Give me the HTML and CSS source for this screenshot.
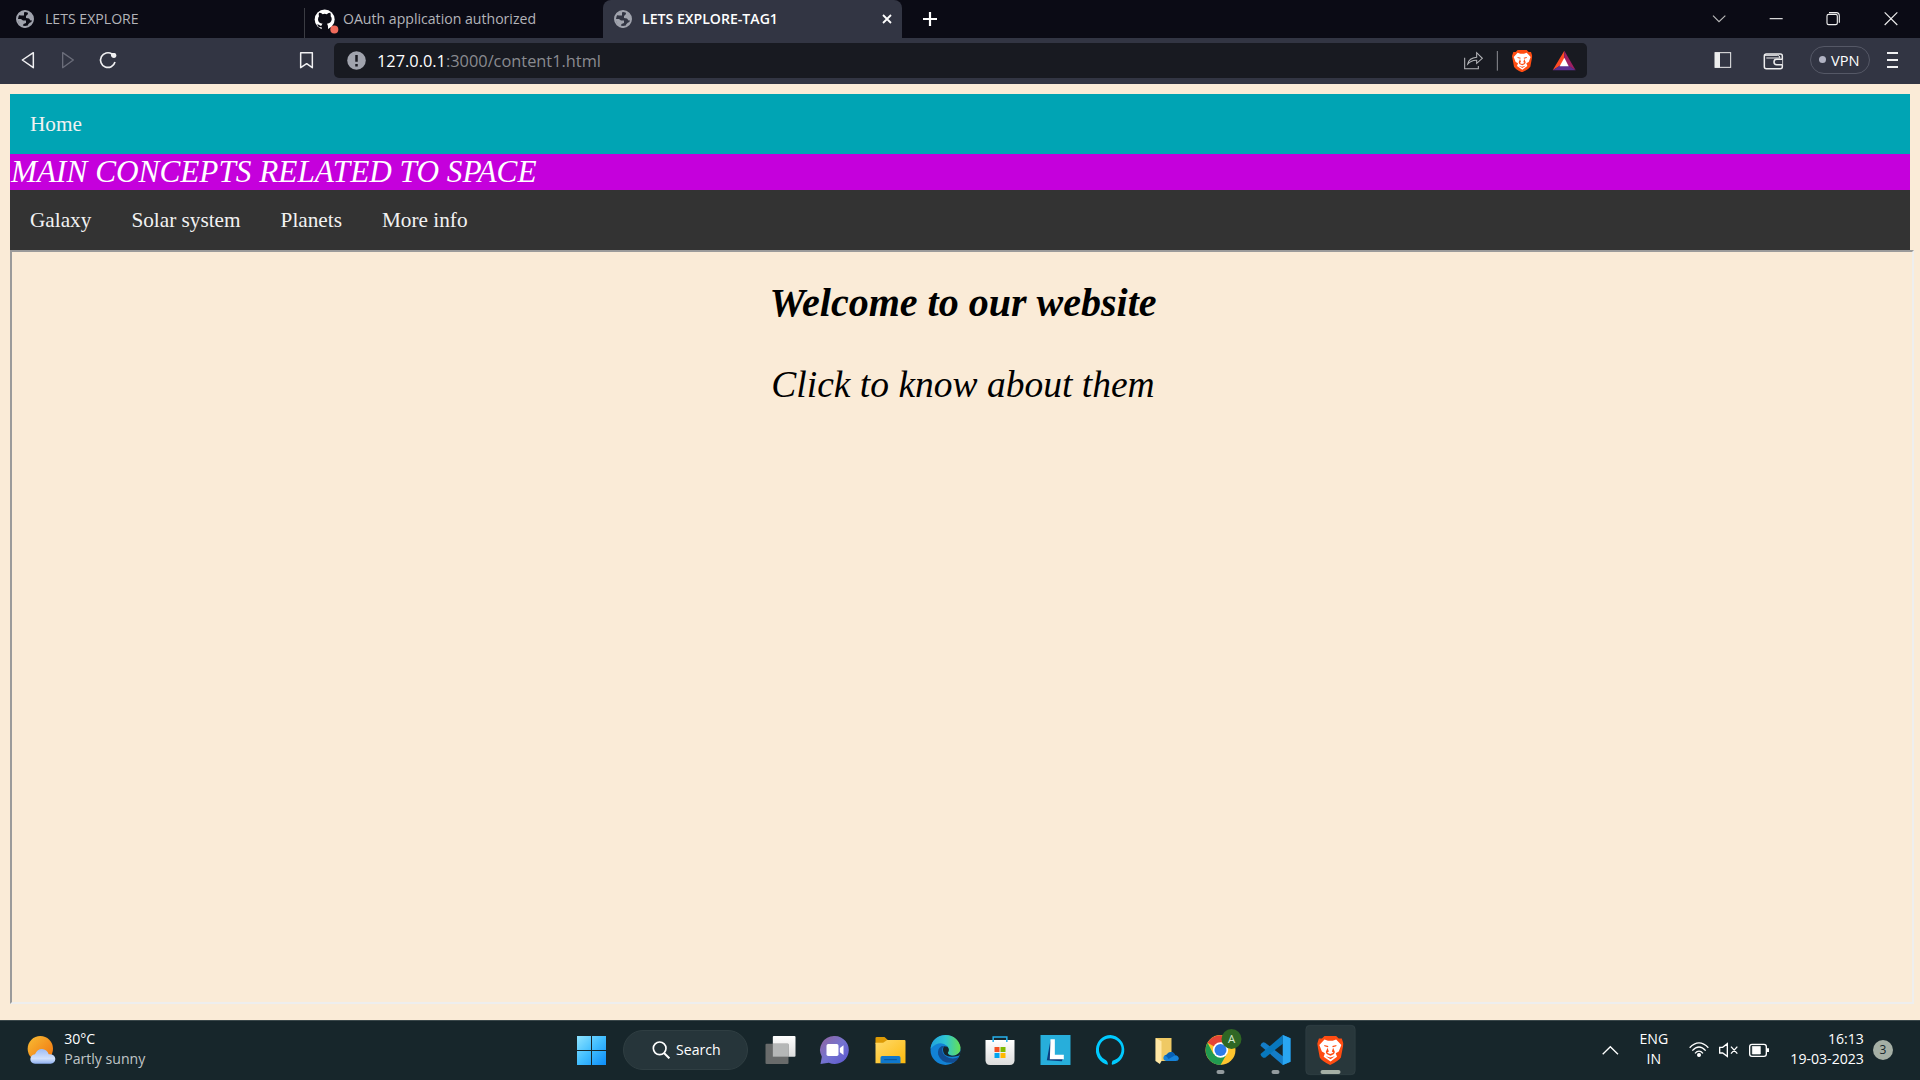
FILE: index.html
```html
<!DOCTYPE html>
<html lang="en">
<head>
<meta charset="utf-8">
<title>LETS EXPLORE-TAG1</title>
<link rel="stylesheet" href="styles.css">
</head>
<body>
<svg class="defs" width="0" height="0">
  <defs>
    <symbol id="globe" viewBox="0 0 18 18"><circle cx="9" cy="9" r="8" fill="none" stroke="#a0a3ad" stroke-width="2"/><path d="M1.5 7 2.5 5 5 5.5 8 5.5 8 2.5 10 1H6L2 4 1 9 5 9 7 10.5 10 10.5 10 13 7.5 14 6.5 17 9 18 13 16 12 14.5 14 12.5 17 12 17 6 15 3.5 11.5 1.5 12 4 10 6 10 8 13 8.5 14.5 10.5 17 10 16 14 10 17.2 4 15 1 9Z" fill="#a0a3ad" fill-rule="evenodd"/></symbol>
    <symbol id="lion" viewBox="216 148 61 69"><path d="M233 150H260L266 156H273L277 168 271 200Q266 208 246 217 226 208 222 200L216 168 220 156H227Z" fill="#ff4d12"/><path d="M233 158 241 161H252L260 158 272 171 266 186 259 190 262 198 247 209 231 198 234 190 227 186 221 171Z" fill="#fff"/><path d="M232 171 242 173 241 176 233 174ZM261 171 251 173 252 176 260 174ZM240 177 243 186 239 189 246 192 254 189 250 186 253 177 257 187 255 192 247 196 238 192 236 187ZM236 197 246 200 257 197 247 204Z" fill="#ff4d12"/></symbol>
    <linearGradient id="win" x1="0" y1="0" x2="1" y2="1"><stop stop-color="#8fe4ff"/><stop offset=".5" stop-color="#40bdff"/><stop offset="1" stop-color="#0c8cf8"/></linearGradient>
    <linearGradient id="chat" x1="0" y1="0" x2="1" y2="1"><stop stop-color="#93639c"/><stop offset=".5" stop-color="#7574d0"/><stop offset="1" stop-color="#5a55cf"/></linearGradient>
    <linearGradient id="fold" x1="0" y1="0" x2="1" y2="1"><stop stop-color="#ffda6b"/><stop offset="1" stop-color="#fcb90c"/></linearGradient>
    <linearGradient id="edge" x1="0" y1="0" x2="1" y2="0"><stop stop-color="#21a2df"/><stop offset=".5" stop-color="#2fc6d2"/><stop offset="1" stop-color="#66e052"/></linearGradient>
    <linearGradient id="white" x1="0" y1="0" x2="0" y2="1"><stop stop-color="#fff"/><stop offset="1" stop-color="#dcdcdc"/></linearGradient>
    <linearGradient id="sun" x1="0" y1="0" x2="1" y2="1"><stop stop-color="#f8bd35"/><stop offset="1" stop-color="#f0700c"/></linearGradient>
    <linearGradient id="cloud" x1="0" y1="0" x2="0" y2="1"><stop stop-color="#9dbcf4"/><stop offset=".65" stop-color="#d2e1fb"/><stop offset="1" stop-color="#8fb0f0"/></linearGradient>
  </defs>
</svg>

<header class="tabs">
  <div class="tab first"><svg class="globe"><use href="#globe"/></svg><span>LETS EXPLORE</span></div>
  <div class="tab second">
    <svg class="github" viewBox="940 26 75 74"><circle cx="972" cy="57" r="30" fill="#fff"/><path d="M955 37Q962 37 966 41 972 39 978 41 984 37 989 37 991 42 990 47 994 51 993 58 991 68 979 70 982 74 982 79V89H963V80Q953 82 949 72 955 71 958 75 961 77 963 74 964 71 966 70 953 68 952 58 952 51 955 47 953 42 955 37Z" fill="#0b0b15"/><circle cx="1001" cy="87" r="12" fill="#ef6a5b"/></svg>
    <span>OAuth application authorized</span>
  </div>
  <div class="tab active"><svg class="globe"><use href="#globe"/></svg><span>LETS EXPLORE-TAG1</span><svg class="x" viewBox="0 0 10 10"><path d="M1 1 9 9M9 1 1 9" stroke="#fff" stroke-width="1.8"/></svg></div>
  <svg class="plus" viewBox="0 0 16 16"><path d="M8 1V15M1 8H15" stroke="#fff" stroke-width="2.2"/></svg>
  <svg class="wincontrols" viewBox="775 0 665 114" fill="none" stroke="#eee" stroke-width="3.4"><path d="M820 47 838 65 857 47" stroke="#bbb"/><path d="M990 56H1029"/><rect x="1162" y="43" width="31" height="31" rx="5"/><path d="M1168 38H1190Q1199 38 1199 48V68"/><path d="M1335 37 1373 75M1373 37 1335 75"/></svg>
</header>

<div class="toolbar">
  <svg class="btn" viewBox="24 114 120 138"><path d="M100 158V203L67 180Z" fill="none" stroke="#f0f0f2" stroke-width="4.5" stroke-linejoin="round"/></svg>
  <svg class="btn" viewBox="144 114 120 138"><path d="M188 158V203L220 180Z" fill="none" stroke="#6b6d7a" stroke-width="4" stroke-linejoin="round"/></svg>
  <svg class="btn" viewBox="264 114 120 138"><path d="M336 162A22 22 0 1 0 345 186" fill="none" stroke="#f0f0f2" stroke-width="5"/><path d="M333 159H344Q349 160 349 166 349 174 342 174 334 174 333 166Z" fill="#f0f0f2"/></svg>
  <svg class="btn mark" viewBox="858 114 120 138"><path d="M902 158H937V203L920 191 902 203Z" fill="none" stroke="#f0f0f2" stroke-width="4.5" stroke-linejoin="round"/></svg>
  <div class="address">
    <svg class="info" viewBox="0 0 19 19"><circle cx="9.5" cy="9.5" r="9.3" fill="#a0a3ad"/><path d="M9.5 4V10.8M9.5 13V15.4" stroke="#181a21" stroke-width="2.5"/></svg>
    <span class="url"><b>127.0.0.1</b>:3000/content1.html</span>
    <svg class="tools" viewBox="60 129 381 105"><path d="M74 173V206H115V198M83 192Q87 174 110 172V158L127 175 110 190V181Q95 180 83 192Z" fill="none" stroke="#b4b5b9" stroke-width="3.2"/><path d="M172 153V212" stroke="#8d8f95" stroke-width="3"/><use href="#lion" x="216" y="148" width="61" height="69"/><path d="M373 152 338 211 372 190Z" fill="#ff4b23"/><path d="M373 152 407 211 372 190Z" fill="#9e1f63"/><path d="M338 211H407L373 188Z" fill="#5c2f91"/><path d="M373 173 359 199H386Z" fill="#fff"/></svg>
  </div>
  <svg class="side" viewBox="800 114 260 138" fill="none" stroke="#ededee" stroke-width="3"><rect x="824" y="158" width="47" height="44"/><path d="M824 157H839V203H824Z" fill="#ededee" stroke="none"/><rect x="972" y="162" width="54" height="44" rx="6" stroke-width="4.5"/><path d="M974 166H1012Q1018 166 1019 174H978" stroke-width="3"/><path d="M1026 178H1009Q1001 178 1001 186 1001 194 1009 194H1026" fill="#323543" stroke-width="4.5"/></svg>
  <div class="vpn"><i></i><span>VPN</span></div>
  <svg class="menu" viewBox="0 0 11 16"><path d="M0 1H11M0 8H11M0 15H11" stroke="#f0f0f2" stroke-width="1.8"/></svg>
</div>

<main>
  <nav class="home"><a>Home</a></nav>
  <div class="banner">MAIN CONCEPTS RELATED TO SPACE</div>
  <nav class="topics"><a>Galaxy</a><a>Solar system</a><a>Planets</a><a>More info</a></nav>
  <section class="frame"><h1>Welcome to our website</h1><p>Click to know about them</p></section>
</main>

<footer class="taskbar">
  <div class="weather">
    <svg viewBox="80 165 87 90"><circle cx="120" cy="206" r="38" fill="url(#sun)"/><path d="M104 251Q90 250 90 237 91 225 104 223 111 207 125 207 140 208 145 223 164 222 165 237 164 250 151 251Z" fill="url(#cloud)"/></svg>
    <div class="text"><p>30°C</p><p class="dim">Partly sunny</p></div>
  </div>
  <div class="apps">
    <svg class="start" viewBox="51 78 87 87"><path d="M51 78H93V120H51ZM96 78H138V120H96ZM51 123H93V165H51ZM96 123H138V165H96Z" fill="url(#win)"/></svg>
    <div class="search"><svg viewBox="275 93 54 54"><circle cx="298" cy="115" r="19" fill="none" stroke="#fff" stroke-width="5"/><path d="M311 129 327 145" stroke="#fff" stroke-width="6"/></svg><span>Search</span></div>
    <svg class="app" viewBox="577.5 30 165 180"><rect x="637" y="78" width="68" height="62" rx="3" fill="url(#white)"/><rect x="615" y="101" width="69" height="61" rx="3" fill="#696b6b"/><path d="M637 101H684V140H637Z" fill="#b5b7b7"/></svg>
    <svg class="app" viewBox="742.5 30 165 180"><path d="M823 78A42 42 0 1 1 805 158L780 162 784 140A42 42 0 0 1 823 78Z" fill="url(#chat)"/><rect x="798" y="102" width="36" height="36" rx="5" fill="#fff"/><path d="M838 114 849 106V135L838 127Z" fill="#fff"/></svg>
    <svg class="app" viewBox="907.5 30 165 180"><path d="M945 84Q945 81 949 81H972L982 90V102H945Z" fill="#dd9a05"/><path d="M945 98H968L980 90H1032Q1035 90 1035 94V160H945Z" fill="url(#fold)"/><path d="M960 160V143Q960 138 965 138H1015Q1020 138 1020 143V160Z" fill="#0f78cd"/><path d="M971 149H1009" stroke="#07549b" stroke-width="3"/></svg>
    <svg class="app" viewBox="1072.5 30 165 180"><circle cx="1155" cy="120" r="45" fill="#1282d5"/><path d="M1110 116Q1115 78 1155 75 1193 77 1200 112 1201 135 1178 137 1162 136 1161 127 1168 118 1160 108 1138 88 1110 116Z" fill="url(#edge)"/><path d="M1144 108Q1130 115 1133 134 1143 162 1179 158 1191 151 1196 140 1183 148 1166 144 1146 137 1145 120 1145 114 1150 109Z" fill="#124d92"/><path d="M1150 109Q1144 123 1153 134 1166 145 1194 137L1200 132V122Q1192 137 1174 137 1163 135 1162 128 1169 119 1161 110Z" fill="#17262b"/></svg>
    <svg class="app" viewBox="7.5 30 165 180"><path d="M45 90H132V151Q132 165 118 165H59Q45 165 45 151Z" fill="url(#white)"/><path d="M68 96V81H109V96" fill="none" stroke="#27b1ed" stroke-width="4.5"/><path d="M72 111H87V126H72Z" fill="#f25022"/><path d="M90 111H105V126H90Z" fill="#7fba00"/><path d="M72 129H87V144H72Z" fill="#00a4ef"/><path d="M90 129H105V144H90Z" fill="#ffb900"/></svg>
    <svg class="app" viewBox="172.5 30 165 180"><path d="M210 75H300V165H210Z" fill="#27aedb"/><path d="M240 91 229 151 274 154 280 138H245Z" fill="#0b3c7e"/><path d="M240 88H253V134H280V148H238Z" fill="#fff"/></svg>
    <svg class="app" viewBox="337.5 30 165 180"><path d="M420 75A45 45 0 0 1 425 164Q422 162 426 152A34 34 0 1 0 402 148Q413 154 412 164A45 45 0 0 1 420 75Z" fill="#00caff"/></svg>
    <svg class="app" viewBox="502.5 30 165 180"><path d="M556 84H603V153H556Z" fill="#efc964"/><path d="M555 84 573 94V153L568 162 555 153Z" fill="#ffe7a4"/><path d="M587 153Q577 151 579 141 581 134 588 134 594 124 604 126 612 128 614 136 624 137 625 146 624 153 616 153Z" fill="#1683d9"/><path d="M588 134Q597 122 609 128L614 136 594 147Q590 138 583 137Z" fill="#0760b4"/></svg>
    <svg class="app" viewBox="667.5 30 165 180"><circle cx="750" cy="120" r="45" fill="#ffc52e"/><path d="M750 120 711 98A45 45 0 0 1 789 98H750Z" fill="#e44436"/><path d="M711 98A45 45 0 0 0 750 165L770 130 750 120 729 132Z" fill="#219b50"/><circle cx="750" cy="120" r="23" fill="#fff"/><circle cx="750" cy="120" r="18" fill="#2c7be9"/><circle cx="783" cy="87" r="30" fill="#2f6724"/><text x="783" y="99" font-size="34" text-anchor="middle" fill="#d6ead0">A</text><rect x="738" y="180" width="24" height="12" rx="6" fill="#939b9e"/></svg>
    <svg class="app" viewBox="832.5 30 165 180"><path d="M937 75 960 85V155L937 165 870 107Q870 101 878 97L884 98 937 139Z" fill="#147dc8"/><path d="M937 75V101L884 143 878 143Q870 138 870 132Z" fill="#0878be"/><path d="M937 75 960 85V155L937 165Z" fill="#29a6f2"/><rect x="903" y="180" width="24" height="12" rx="6" fill="#939b9e"/></svg>
    <svg class="app" viewBox="997.5 30 165 180"><rect x="1006" y="46" width="148" height="148" rx="12" fill="#28373b" stroke="#344347" stroke-width="2"/><use href="#lion" x="1040" y="75" width="79" height="90"/><rect x="1050" y="180" width="60" height="12" rx="6" fill="#a5afa5"/></svg>
  </div>
  <div class="tray">
    <svg class="chev" viewBox="65 193 50 31"><path d="M67 221 90 198 113 221" fill="none" stroke="#fff" stroke-width="4"/></svg>
    <div class="lang text"><p>ENG</p><p>IN</p></div>
    <svg class="status" viewBox="330 180 243 60" fill="none" stroke="#fff" stroke-width="4"><path d="M332 203Q360 174 388 203M340 212Q360 190 380 212M348 220Q360 207 372 220"/><circle cx="360" cy="225" r="4" fill="#fff"/><path d="M422 202H431L445 191V229L431 219H422ZM456 200 475 221M475 200 456 221"/><rect x="512" y="193" width="50" height="36" rx="7"/><path d="M520 199H544V222H520Z" fill="#fff" stroke="#fff" stroke-width="2"/><path d="M567 205V216" stroke-width="6"/></svg>
    <div class="clock text"><p>16:13</p><p>19-03-2023</p></div>
    <span class="badge">3</span>
  </div>
</footer>
</body>
</html>
```
FILE: styles.css
```css
* { box-sizing: border-box; }
body { margin: 0; width: 1920px; height: 1080px; overflow: hidden; display: flex; flex-direction: column; background: #faebd7; font-family: "Open Sans", "Noto Sans", sans-serif; }
svg { display: block; flex: none; }
p, h1 { margin: 0; }
span, p, a { white-space: nowrap; }
.defs { position: absolute; }

.tabs { height: 38px; flex: none; display: flex; align-items: center; background: #0b0b15; color: #b3b4b9; font-size: 14.1px; }
.tab { height: 38px; display: flex; align-items: center; }
.tab span { margin-bottom: 2px; }
.first { width: 304px; padding-left: 16px; gap: 11px; }
.second { width: 299px; padding-left: 8.5px; gap: 4.5px; border-left: 1px solid #3b3c43; border-image: linear-gradient(transparent 9px, #3b3c43 9px) 1; }
.active { width: 299px; padding: 0 10px 0 11px; background: #323543; border-radius: 8px 8px 0 0; color: #fff; font-weight: 600; gap: 10px; }
.globe { width: 18px; height: 18px; }
.github { width: 25px; height: 25px; margin-top: 4px; }
.x { width: 10px; height: 10px; margin-left: auto; }
.plus { width: 16px; height: 16px; margin-left: 20px; }
.wincontrols { width: 221.67px; height: 38px; margin-left: auto; }

.toolbar { height: 46px; flex: none; display: flex; align-items: center; padding: 0 22px 0 8px; background: #323543; }
.btn { width: 40px; height: 46px; }
.mark { margin-left: 158px; }
.address { width: 1253px; height: 35px; margin: 0 119.7px 1px 8px; display: flex; align-items: center; padding-left: 13px; gap: 11px; background: #181a21; border-radius: 5px; }
.info { width: 19px; height: 19px; }
.url { color: #8a8b90; font-size: 16.35px; }
.url b { color: #fff; font-weight: 400; }
.tools { width: 127px; height: 35px; margin-left: auto; }
.side { width: 86.67px; height: 46px; }
.vpn { width: 60px; height: 28px; margin: 0 17px 2px 16.6px; display: flex; align-items: center; gap: 5px; padding: 0 0 1px 8px; border: 1px solid #555866; border-radius: 14px; color: #fff; font-size: 14.6px; }
.vpn i { width: 7px; height: 7px; border-radius: 50%; background: #b1b3c3; }
.menu { width: 11px; height: 16px; margin-bottom: 2px; }

main { flex: 1; padding: 10px 10px 0; font-family: "Liberation Serif", serif; }
nav { display: flex; height: 60px; align-items: center; font-size: 21.25px; color: #f2f2f2; }
nav a { padding: 0 20px; }
.home { background: #00a4b4; }
.banner { height: 36px; line-height: 36px; padding-left: 1px; background: #c500dc; color: #fff; font-style: italic; font-size: 31.25px; }
.topics { background: #333; }
.frame { width: 1904px; height: 754px; border: 2px solid; border-color: #9a9a9a #eee #eee #9a9a9a; text-align: center; font-style: italic; padding-top: 28px; padding-left: 2px; }
.frame h1 { font-size: 40px; line-height: 46px; }
.frame p { margin-top: 37px; font-size: 37.5px; line-height: 44px; }

.taskbar { height: 60px; flex: none; display: grid; grid-template-columns: 577px 1fr 563px; background: #17262b; box-shadow: inset 0 1px #3a474a; color: #fff; font-size: 14.1px; line-height: 20px; }
.weather, .apps, .tray { display: flex; align-items: center; height: 60px; }
.text { margin-bottom: 2px; }
.weather { padding-left: 26.7px; gap: 8.5px; }
.weather svg { width: 29px; height: 30px; }
.dim { color: #c0c5c7; }
.start { width: 29px; height: 29px; }
.search { width: 125px; height: 40px; margin: 0 4.5px 0 17px; padding-left: 28px; display: flex; align-items: center; gap: 6px; border-radius: 20px; background: #26353a; border: 1px solid #2f3e42; }
.search svg { width: 18px; height: 18px; }
.app { width: 55px; height: 60px; }
.tray { padding-left: 244.7px; }
.chev { width: 16.7px; height: 10.3px; }
.lang { width: 30px; margin-left: 20px; }
.lang p { display: flex; justify-content: center; }
.status { width: 81px; height: 20px; margin-left: 20px; }
.clock { width: 76px; margin-left: 18px; }
.clock p { display: flex; justify-content: flex-end; }
.badge { width: 20px; height: 20px; margin-left: 9px; border-radius: 50%; background: #a5afa5; color: #17262b; font-size: 12px; text-align: center; }
```
